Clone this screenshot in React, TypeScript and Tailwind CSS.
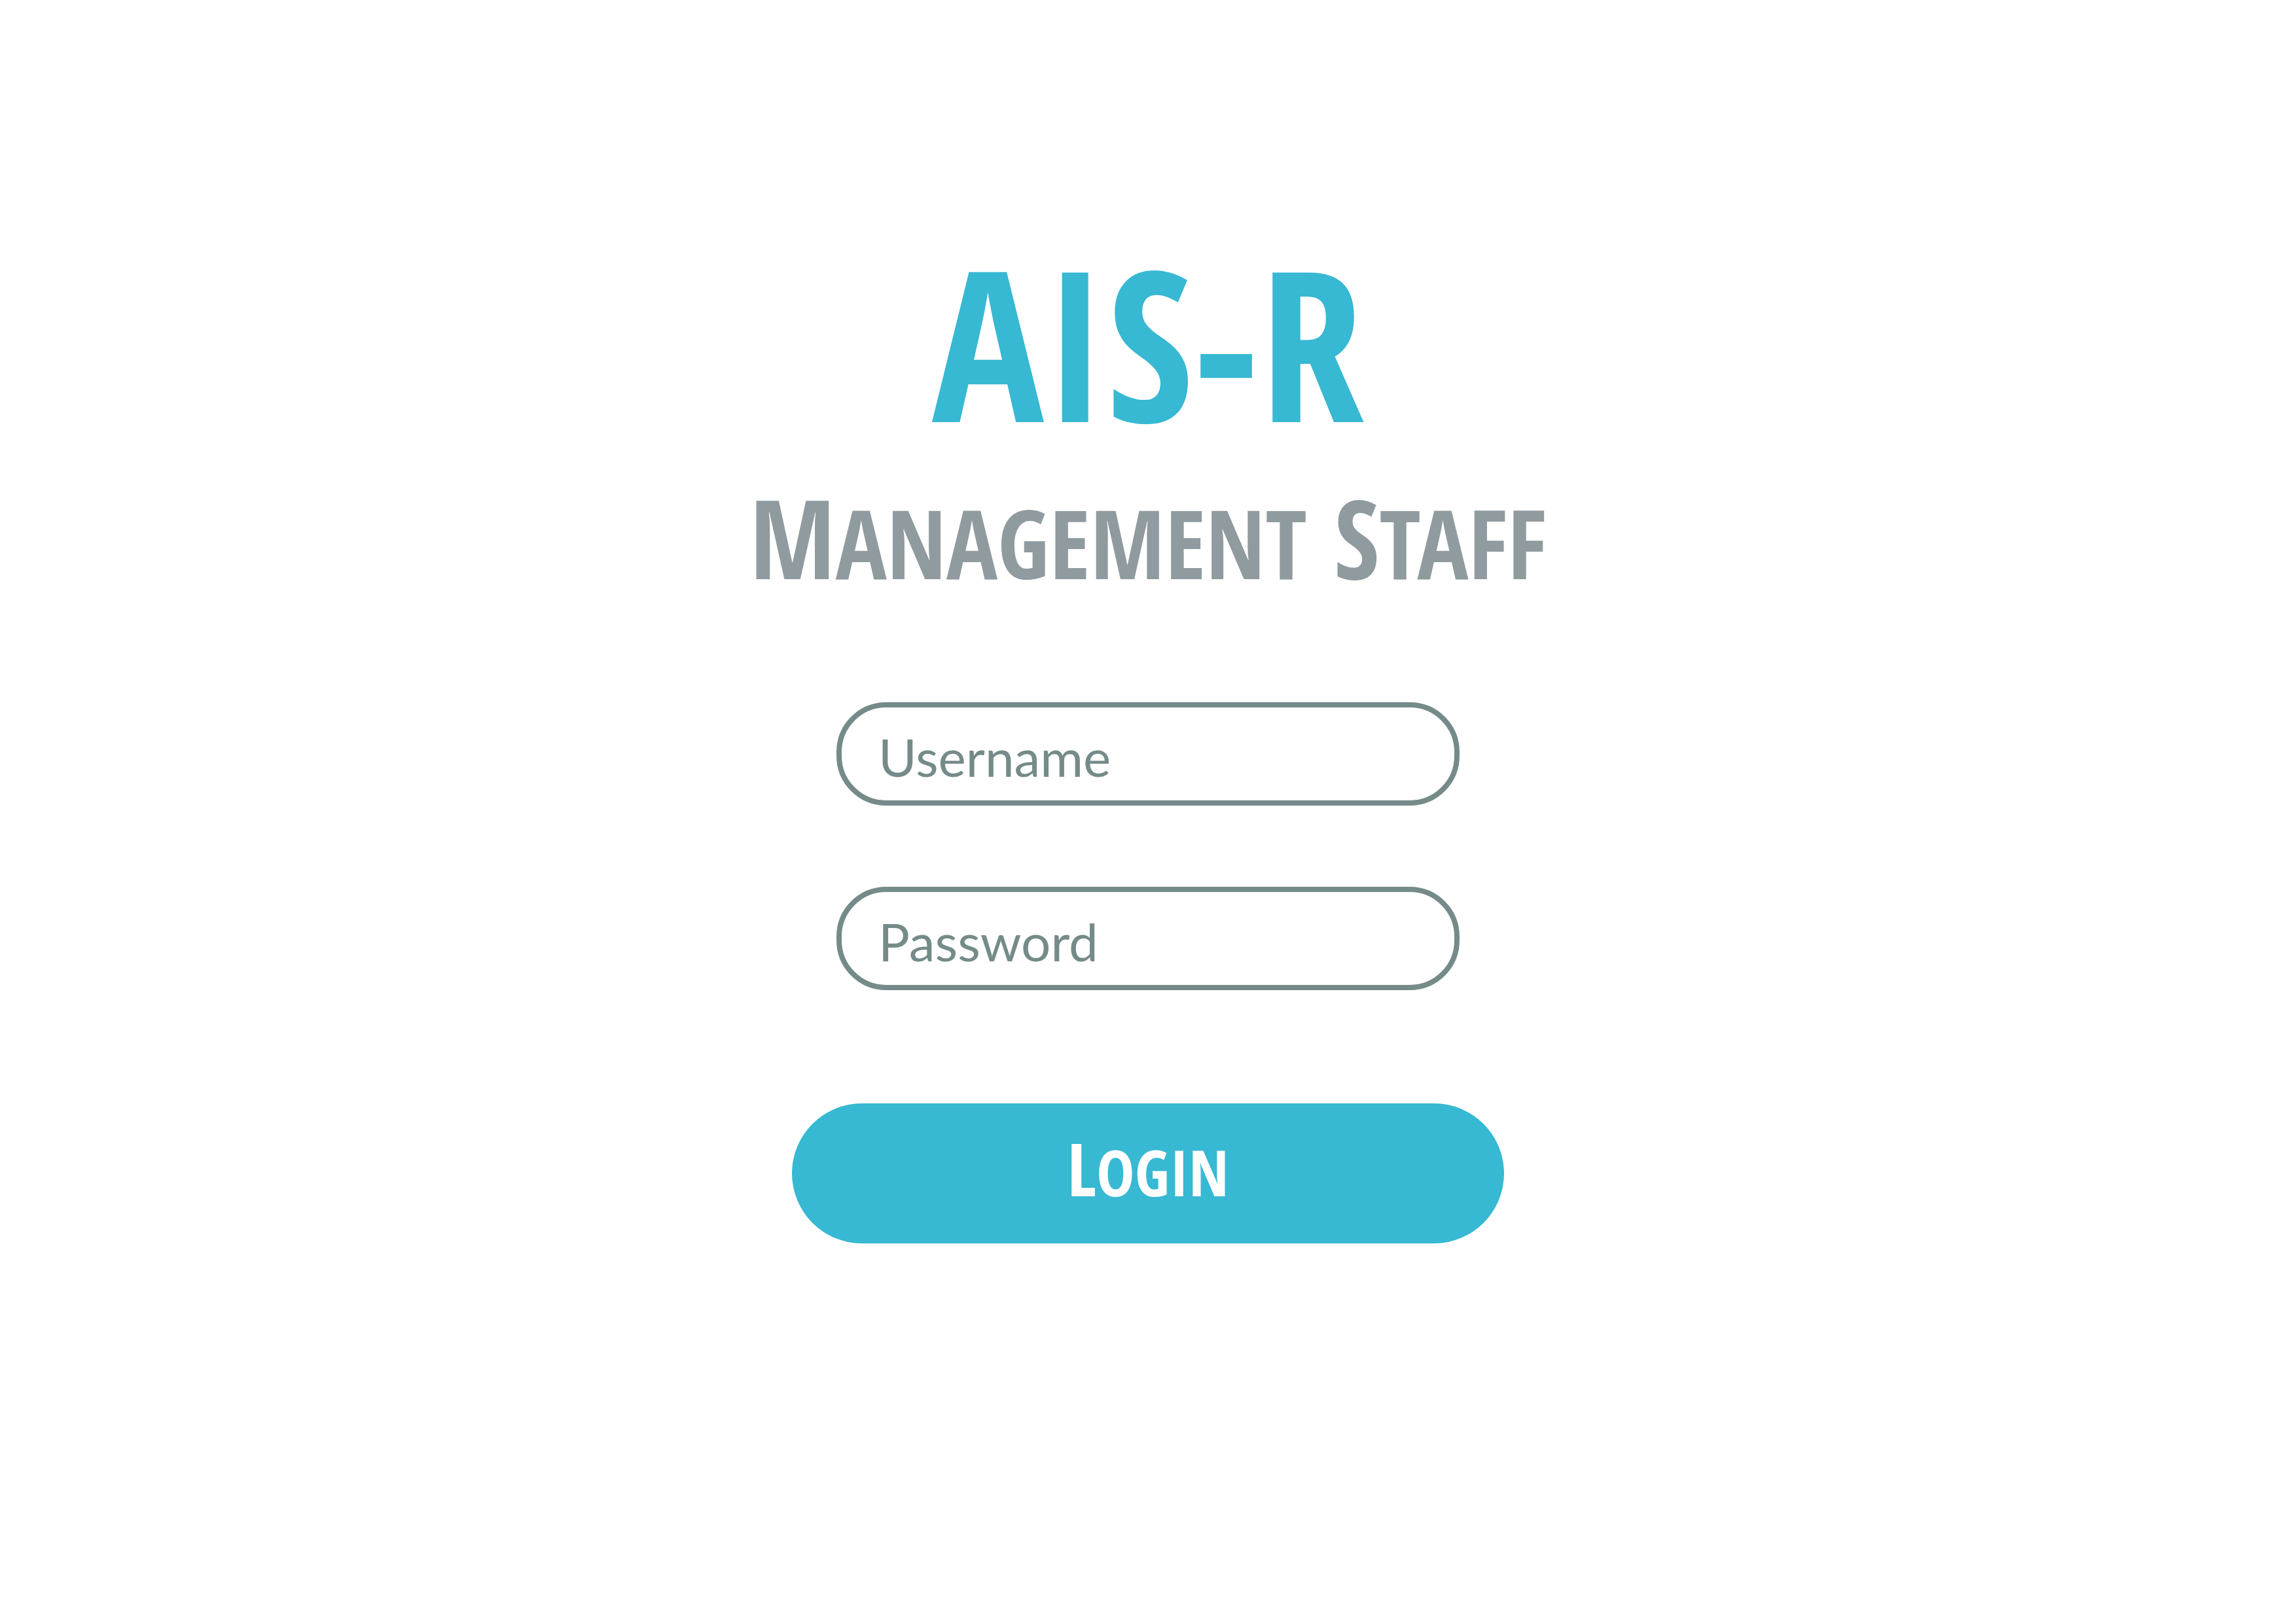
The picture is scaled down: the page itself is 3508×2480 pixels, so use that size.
const field =
  "h-[158px] w-full rounded-[76px] border-8 border-[#758b8a] bg-transparent px-14 pt-2 text-[80px] font-normal text-[#758b8a] outline-none placeholder:text-[#758b8a] placeholder:opacity-100 font-['Lato',sans-serif]";

export default function App() {
  return (
    <main className="flex min-h-screen flex-col items-center bg-white pt-[376px] font-['Open_Sans_Condensed','Roboto_Condensed',sans-serif] font-bold">
      <h1 className="whitespace-nowrap text-[320px] leading-[290px] text-[#37b8d3]">AIS-R</h1>
      <h2 className="mt-[74px] whitespace-nowrap text-[168px] leading-[160px] text-[#909b9f]">
        M<span className="text-[146px] leading-none">ANAGEMENT</span> S<span className="text-[146px] leading-none">TAFF</span>
      </h2>
      <form className="mt-[171px] flex w-full max-w-[1088px] flex-col items-center" onSubmit={(e) => e.preventDefault()}>
        <div className="flex w-full max-w-[952px] flex-col gap-[124px]">
          <input className={field} type="text" aria-label="Username" placeholder="Username" />
          <input className={field} type="password" aria-label="Password" placeholder="Password" />
        </div>
        <button type="submit" className="mt-[173px] h-[214px] w-full rounded-full bg-[#37b8d3] pb-4 text-[112px] leading-none text-white">
          L<span className="text-[98px]">OGIN</span>
        </button>
      </form>
    </main>
  );
}
